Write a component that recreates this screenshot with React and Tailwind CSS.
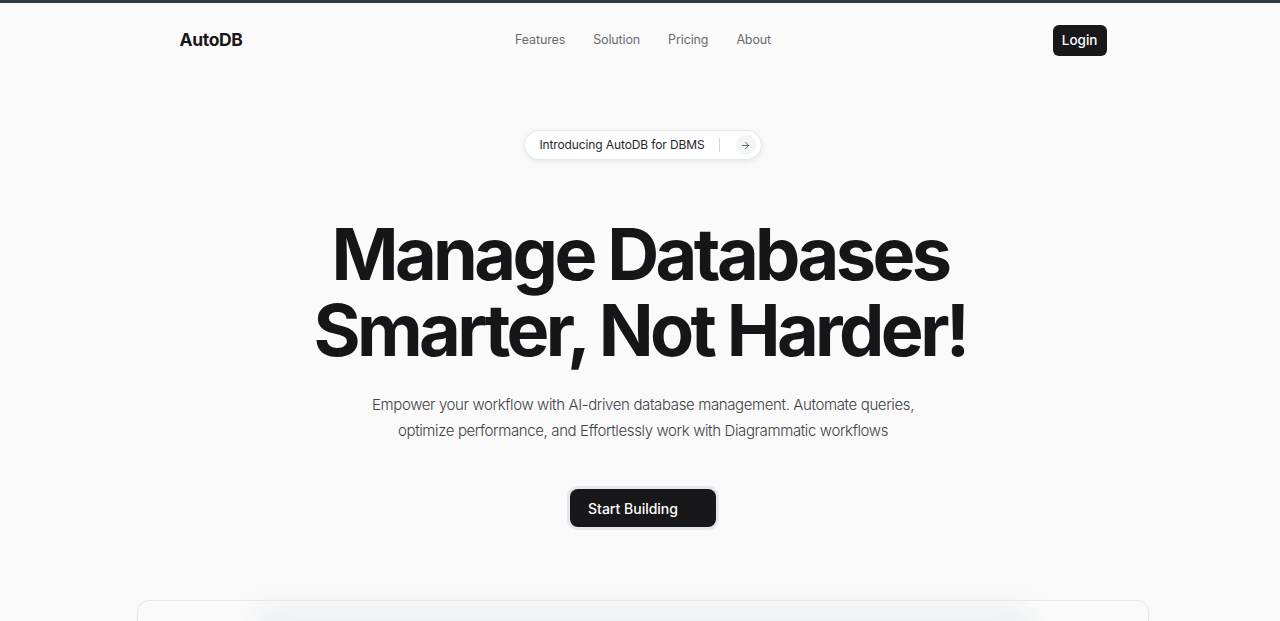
import React from 'react';
import { ArrowRight } from 'lucide-react';

const links = ['Features', 'Solution', 'Pricing', 'About'];

export default function App() {
  return (
    <div className="min-h-[621px] bg-[#fafafa] font-['Inter',sans-serif] text-[#18181b] overflow-hidden">
      <div className="h-[3px] bg-[#2c3e44]" />

      <div className="pl-[6px]">
        <header className="mx-auto w-[927px] h-[75px] grid grid-cols-3 items-center">
          <span className="justify-self-start text-[17.5px] font-bold tracking-[-0.02em]">AutoDB</span>
          <nav className="justify-self-center flex items-center gap-[28px] text-[12.5px] tracking-[-0.01em] text-[#6b6b70]">
            {links.map(l => (
              <a key={l} href="#" className="hover:text-gray-900">{l}</a>
            ))}
          </nav>
          <button className="justify-self-end h-[31px] px-[9px] rounded-md bg-[#18181b] text-white text-[13.5px] font-medium">
            Login
          </button>
        </header>

        <main className="flex flex-col items-center pt-[52px]">
          <div className="flex items-center h-[30px] pl-[14px] pr-[5px] rounded-full border border-gray-200 bg-white shadow-[0_2px_6px_rgba(0,0,0,0.08)]">
            <span className="text-[12px] tracking-[-0.01em] text-[#27272a]">Introducing AutoDB for DBMS</span>
            <span className="ml-[14px] mr-[16px] w-px h-[14px] bg-gray-300" />
            <span className="w-[20px] h-[20px] rounded-full bg-gray-100 flex items-center justify-center">
              <ArrowRight size={11} strokeWidth={2} className="text-gray-600" />
            </span>
          </div>

          <h1 className="mt-[56px] pr-[6px] text-center text-[72px] leading-[76px] font-bold tracking-[-0.05em] text-[#161618]">
            Manage Databases<br />Smarter, Not Harder!
          </h1>

          <p className="mt-[24px] text-center text-[15px] leading-[26px] font-light tracking-[-0.025em] text-[#3f3f46]">
            Empower your workflow with AI-driven database management. Automate queries,<br />
            optimize performance, and Effortlessly work with Diagrammatic workflows
          </p>

          <button className="mt-[45px] h-[38px] pl-[18px] pr-[38px] rounded-lg bg-[#18181b] text-white text-[14px] font-medium ring-[3px] ring-gray-200">
            Start Building
          </button>

          <div className="mt-[73px] w-[1012px] h-[60px] rounded-t-xl border border-gray-200 bg-[#fbfbfb] flex justify-center">
            <div className="mt-[6px] w-[780px] h-[40px] rounded-full bg-gray-200/60 blur-md" />
          </div>
        </main>
      </div>
    </div>
  );
}
